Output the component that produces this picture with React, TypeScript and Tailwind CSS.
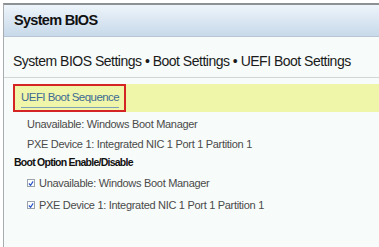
export default function App() {
  const font = { fontFamily: '"Liberation Sans", Arial, sans-serif' };
  const items = ['Unavailable: Windows Boot Manager', 'PXE Device 1: Integrated NIC 1 Port 1 Partition 1'];

  return (
    <div className="w-[379px] h-[247px] bg-white overflow-hidden" style={font}>
      <div className="ml-[3px] mt-[3px] h-[244px] border-l border-l-[#a9adb0] border-t-2 border-t-[#8c9196] bg-[#f7fbf9]">
        <div className="h-[32px] flex items-center pl-[10px] bg-gradient-to-b from-[#eef4fa] to-[#c7d9ea] border-b border-[#b7c6d4]">
          <span className="text-[14.5px] font-bold tracking-[-0.7px] text-[#111]">System BIOS</span>
        </div>

        <div className="h-[41px] pt-[12px] pl-[9px] border-b border-[#d2d6d6] whitespace-nowrap">
          <span className="text-[14px] tracking-[-0.5px] text-[#1a1a1a]">
            System BIOS Settings • Boot Settings • UEFI Boot Settings
          </span>
        </div>

        <div className="mt-[6px] h-[28px] flex items-stretch bg-[#eff6aa] ml-[9px]">
          <div className="w-[113px] border-2 border-[#d42424] flex items-end pl-[6px] pb-[2px]">
            <span className="whitespace-nowrap text-[11.5px] tracking-[-0.55px] text-[#3d6a93] border-b border-[#7fa1b8] leading-[14px] pb-[3px]">
              UEFI Boot Sequence
            </span>
          </div>
        </div>

        <div className="pl-[23px] pt-[2px] text-[11px] tracking-[-0.3px] text-[#4a4a4a] leading-[20px] whitespace-nowrap">
          {items.map((t) => (
            <div key={t}>{t}</div>
          ))}
        </div>

        <div className="pl-[10px] text-[10.5px] font-bold tracking-[-0.75px] text-[#111] leading-[16px]">
          Boot Option Enable/Disable
        </div>

        <div className="pl-[23px] pt-[2px] text-[11px] tracking-[-0.3px] text-[#4a4a4a] leading-[22px] whitespace-nowrap">
          {items.map((t) => (
            <div key={t} className="flex items-center gap-[4px]">
              <span className="w-[8px] h-[8px] border border-[#9aa3aa] bg-white flex items-center justify-center">
                <svg width="7" height="7" viewBox="0 0 7 7">
                  <path d="M1 3.5 L3 5.5 L6 1" stroke="#2a55c8" strokeWidth="1.4" fill="none" />
                </svg>
              </span>
              <span>{t}</span>
            </div>
          ))}
        </div>
      </div>
    </div>
  );
}
